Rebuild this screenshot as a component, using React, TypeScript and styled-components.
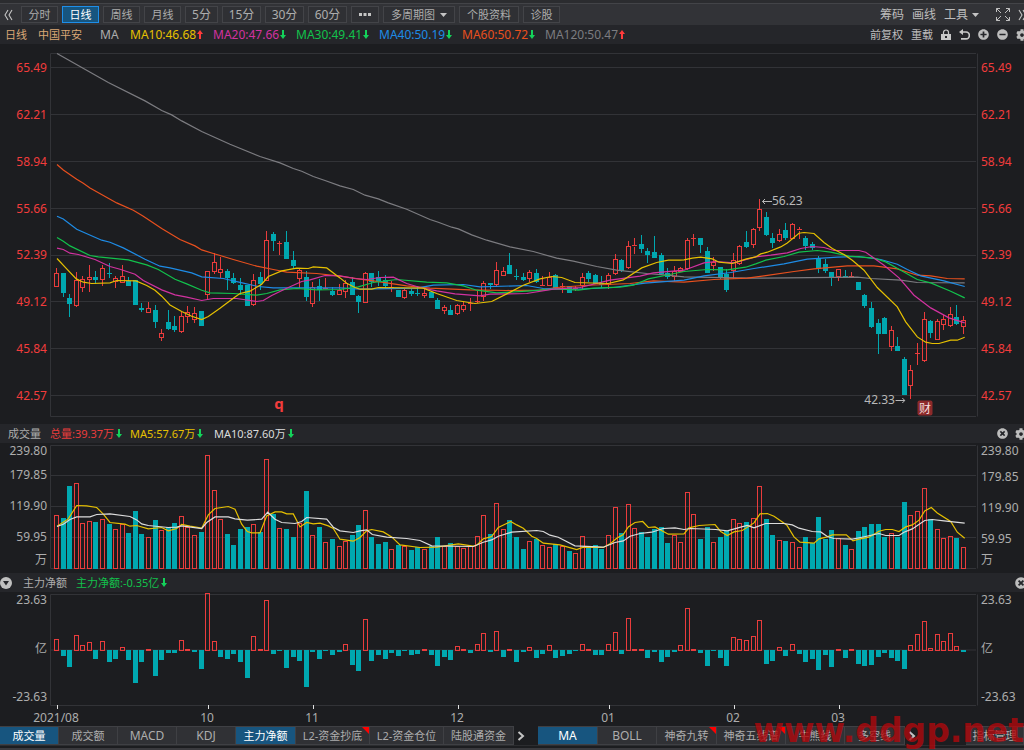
import React from "react";
import styled, { createGlobalStyle } from "styled-components";
import { FaCog, FaPlusCircle, FaMinusCircle, FaTimesCircle } from "react-icons/fa";

const color = {
  page: "#1c1d20",
  bar: "#323337",
  strip: "#25262a",
  edge: "#3f4044",
  grid: "#323337",
  text: "#adadad",
  red: "#ea3c3c",
  label: "#f23c3c",
  teal: "#00a8b0",
  green: "#12c24c",
  yellow: "#e6c000",
  pink: "#d232a0",
  blue: "#1e8ce6",
  orange: "#e8501e",
  gray: "#7c7c80",
  active: "#17557f",
};

const GlobalStyle = createGlobalStyle`
  * { box-sizing: border-box; }
  body {
    margin: 0;
    background: ${color.page};
    color: ${color.text};
    font-family: "Noto Sans", "Noto Sans CJK SC", sans-serif;
    font-size: 12px;
    overflow-x: hidden;
  }
  button, a { font: inherit; color: inherit; text-decoration: none; }
`;

const Page = styled.main`
  position: relative;
  display: flex;
  flex-direction: column;
  overflow: hidden;
`;

const TopEdge = styled.div`
  height: 4px;
  background: #2b2c2f;
  border-bottom: 1px solid #434448;
`;

const Toolbar = styled.nav`
  display: flex;
  align-items: center;
  height: 21px;
  padding-left: 4px;
  background: ${color.bar};
`;

const PeriodGroup = styled.div`
  display: flex;
  flex: 1;
  gap: 4px;
  margin-left: 8px;
`;

const PeriodButton = styled.button<{ $w: number; $active?: boolean; $latin?: boolean }>`
  display: flex;
  align-items: center;
  justify-content: center;
  gap: 5px;
  flex: none;
  width: ${(p) => p.$w}px;
  height: 17px;
  padding: 0;
  white-space: nowrap;
  font-size: ${(p) => (p.$latin ? 12 : 11)}px;
  line-height: 14px;
  border: 1px solid ${(p) => (p.$active ? "#1e8ee8" : "#434448")};
  background: ${(p) => (p.$active ? color.active : "#2f3034")};
  color: ${(p) => (p.$active ? "#fff" : color.text)};
  cursor: pointer;
`;

const PlainButton = styled.button`
  display: flex;
  align-items: center;
  gap: 4px;
  flex: none;
  padding: 0;
  border: 0;
  background: none;
  white-space: nowrap;
  line-height: 16px;
  cursor: pointer;
`;

const Tools = styled.div<{ $gap: number; $small?: boolean }>`
  display: flex;
  align-items: center;
  flex: none;
  gap: ${(p) => p.$gap}px;
  margin-right: ${(p) => (p.$small ? -4 : -3)}px;
  font-size: ${(p) => (p.$small ? 11 : 12)}px;
  color: #bdbdbd;
`;

const InfoRow = styled.header`
  display: flex;
  align-items: center;
  height: 19px;
  background: ${color.strip};
  white-space: nowrap;
  line-height: 16px;
`;

const InfoMain = styled.div`
  display: flex;
  align-items: center;
  flex: 1;
  min-width: 0;
`;

const Name = styled.span<{ $w: number; $c?: string; $latin?: boolean }>`
  flex: none;
  width: ${(p) => p.$w}px;
  color: ${(p) => p.$c || color.text};
  font-size: ${(p) => (p.$latin ? 12 : 11)}px;
`;

const Reading = styled.span<{ $c: string; $w: number; $small?: boolean }>`
  display: flex;
  align-items: center;
  gap: ${(p) => (p.$small ? 2 : 1)}px;
  flex: none;
  min-width: ${(p) => p.$w}px;
  color: ${(p) => p.$c};
  font-size: ${(p) => (p.$small ? 11 : 12)}px;
`;

const Panel = styled.section<{ $h: number }>`
  display: grid;
  grid-template-columns: 50px minmax(0, 1fr) 46px;
  height: ${(p) => p.$h}px;
`;

const Plot = styled.div`
  position: relative;
`;

const Drawing = styled.svg`
  display: block;
  width: 100%;
  height: 100%;
  overflow: visible;
`;

const PriceAxis = styled.div<{ $right?: boolean }>`
  display: flex;
  flex-direction: column;
  justify-content: space-between;
  padding: 16px 3px 20px;
  line-height: 16px;
  text-align: ${(p) => (p.$right ? "left" : "right")};
  color: ${color.label};
`;

const VolumeAxis = styled.div<{ $right?: boolean }>`
  display: grid;
  grid-template-rows: ${(p) => (p.$right ? "26px 31px 31px 21px" : "24px 31px 31px 23px")} 14px;
  padding: 1px 3px 0;
  line-height: 14px;
  text-align: ${(p) => (p.$right ? "left" : "right")};
`;

const FlowAxis = styled(PriceAxis)`
  padding: 1px 3px 2px;
  line-height: 14px;
  color: ${color.text};
`;

const Mark = styled.span<{ $side: "left" | "right" }>`
  position: absolute;
  line-height: 16px;
  transform: translate(${(p) => (p.$side === "left" ? "0" : "-100%")}, -50%);
  display: flex;
  align-items: center;
  color: #b8b8b8;
`;

const Event = styled.span<{ $boxed?: boolean }>`
  position: absolute;
  transform: translate(-50%, -50%);
  width: 15px;
  line-height: 15px;
  text-align: center;
  font-size: ${(p) => (p.$boxed ? 12 : 15)}px;
  font-weight: ${(p) => (p.$boxed ? 400 : 700)};
  border-radius: 2px;
  background: ${(p) => (p.$boxed ? "#8c2a2a" : "none")};
  color: ${(p) => (p.$boxed ? "#f4dede" : color.label)};
`;

const DateAxis = styled.div`
  position: relative;
  height: 20px;
  margin: 0 46px 0 50px;
`;

const DateLabel = styled.time`
  position: absolute;
  top: 4px;
  line-height: 16px;
  transform: translateX(-50%);
`;

const TabBar = styled.nav`
  display: flex;
  align-items: center;
  height: 19px;
  overflow: hidden;
`;

const TabGroup = styled.div`
  display: flex;
  flex: none;
  border: 1px solid ${color.edge};
  border-left: 0;
`;

const Tab = styled.button<{ $w: number; $active?: boolean; $latin?: boolean; $hot?: boolean }>`
  position: relative;
  flex: none;
  width: ${(p) => p.$w}px;
  height: 17px;
  padding: 0;
  border: 0;
  border-right: 1px solid ${color.edge};
  background: ${(p) => (p.$active ? color.active : "#303135")};
  color: ${(p) => (p.$active ? "#fff" : color.text)};
  font-size: ${(p) => (p.$latin ? 12 : 11)}px;
  line-height: 16px;
  white-space: nowrap;
  cursor: pointer;
  &:last-child { border-right: 0; }
  &::after {
    content: "";
    display: ${(p) => (p.$hot ? "block" : "none")};
    position: absolute;
    top: 0;
    right: 0;
    border-top: 7px solid #ff0000;
    border-left: 7px solid transparent;
  }
`;

const NextButton = styled.button`
  display: flex;
  align-items: center;
  justify-content: center;
  flex: none;
  width: 14px;
  height: 17px;
  padding: 0;
  border: 0;
  background: none;
`;

const Spacer = styled.div<{ $w?: number }>`
  flex: ${(p) => (p.$w ? `0 0 ${p.$w}px` : "1")};
`;

const BottomEdge = styled.footer`
  height: 5px;
  border-top: 1px solid #2c2d30;
  border-bottom: 2px solid #3a3a3e;
`;

const Watermark = styled.div`
  position: absolute;
  right: 0;
  bottom: 0;
  font: bold 33px/38px "DejaVu Sans", sans-serif;
  white-space: nowrap;
  color: rgba(178, 8, 12, 0.78);
  pointer-events: none;
`;

/* ---- samples: three sections, stored at three units to a pixel ---- */

const CANDLES: string[] = [
  `r655 670 710 710,g670 670 728 738,g733 745 761 800,r667 690 767 770,r680 688 712 725,r645 681 689 724,g663 683 688 700,r646 655 687 706,g640 669 671 683,r680 685 694 711,r646 680 697 697,g683 693 707 707,g692 692 764 764,g759 774 777 784,r757 775 786 786,g765 780 815 831,r837 850 863 872,g781 817 834 839,g800 828 839 843,r787 799 845 848,r769 787 799 817,r772 790 807 818,g783 783 827 827,r663 664 734 748,r611 638 664 670,r623 657 668 682,g659 663 681 717,g669 684 696 701,g686 705 719 733,g707 707 765 766,r674 691 764 767,g666 683 699 719,r544 571 690 692,g547 553 572 601,r573 579 581 612,g544 578 626 626,g603 632 647 651,r655 661 686 711,g664 682 738 750,r698 711 760 770,g689 708 719 750,r686 714 717 719,g713 723 733 736,r703 720 733 733`,
  `r330 340 363 383,g322 337 373 373,g375 379 395 426,r307 310 398 398,g309 309 333 350,g305 321 334 347,g317 332 345 356,r333 353 354 363,g362 362 378 378,r358 361 383 386,g359 364 369 376,g350 370 371 377,r352 369 375 383,g367 367 383 383,g386 391 416 416,r407 413 422 429,g407 421 434 434,r403 405 431 432,r395 405 418 424,r386 400 401 421,r364 393 394 398,r333 340 380 390,g340 340 342 356,r277 301 344 349,r291 304 317 317,g249 286 311 311,g297 318 320 327,g311 322 327 332,r300 306 325 334,g297 311 334 338,r320 346 347 347,r308 322 346 346,g314 317 351 355,r339 348 349 368,g349 349 367 367,r350 355 356 360,r310 322 346 354,g305 309 324 333,g314 317 341 341,g319 341 342 351,r309 316 344 355,r252 269 311 314,g269 272 302 305,r213 230 293 294,r205 225 228 249,g195 222 234 246,g236 244 252 277,g199 247 261 262,g250 256 310 312,g295 310 318 326,r289 304 319 331,r293 295 304 304`,
  `r175 180 264 268,r163 174 176 196,g175 175 193 216,g203 213 277 277,r232 246 256 270,g262 262 293 295,g267 282 329 334,r220 240 272 294,r196 198 251 252,g154 188 198 203,r146 147 193 203,r58 88 143 152,g98 111 162 167,g160 174 188 202,r148 163 180 185,g130 151 171 179,r130 132 174 174,r143 148 150 176,g170 174 196 209,g187 194 203 209,g230 234 264 278,g238 254 270 277,g278 278 293 315,r267 269 288 301,g272 288 292 293,r277 290 292 292,g306 307 327 329,g342 345 377 382,g366 384 438 442,g417 429 461 521,g411 414 461 461,r439 451 500 512,g472 498 510 510,g532 538 644 644,r556 571 616 656,r489 519 521 552,r397 418 540 544,g422 423 456 471,r419 423 478 479,r406 418 433 447,r382 403 436 440,g376 411 430 432,r408 420 440 459`,
];

const PRICE_BASE = [0, 360, 390];
const X_BASE = [0, 1020, 2052];

const VOLUMES = [
  287, 295, 199, 190, 310, 304, 306, 298, 312, 328, 313, 340, 275, 343, 352, 301, 331, 323, 311, 290, 322, 347, 337, 106,
  211, 298, 343, 377, 328, 323, 312, 338, 118, 283, 325, 328, 351, 310, 215, 347, 322, 368, 359, 379, 363, 346, 317, 271,
  352, 374, 367, 388, 375, 378, 390, 383, 388, 378, 351, 378, 370, 380, 385, 378, 349, 286, 342, 250, 329, 301, 352, 388,
  363, 359, 377, 382, 373, 378, 393, 400, 349, 380, 377, 388, 346, 261, 340, 253, 326, 337, 353, 329, 322, 371, 346, 368,
  218, 284, 359, 323, 368, 351, 335, 298, 310, 307, 295, 199, 298, 346, 362, 364, 368, 382, 353, 370, 292, 359, 331, 355,
  377, 388, 334, 322, 313, 314, 351, 341, 351, 247, 286, 275, 205, 298, 328, 354, 349, 356, 382,
];

const FLOWS = [
  32, -17, -52, 44, 14, 24, -27, 26, -37, -26, 8, -31, -99, -35, 2, -77, -29, -9, -9, 29, 4, -5, -57, 170, 26, -20, -26,
  -12, -35, -85, 41, 4, 149, -11, -3, -54, -20, -34, -111, -6, -26, -3, -14, -5, 17, -46, -62, 92, -32, -14, -26, -9, -17,
  -4, -14, -11, 4, -14, -49, -20, -29, 12, 4, -9, 18, 50, -6, 57, -20, 2, -35, -6, 9, -24, -11, 16, -24, -17, -11, -4, 18,
  4, -14, -14, 18, 53, -11, 95, 2, 4, -24, -6, -37, -20, -6, 15, 125, 2, -9, -49, -4, -23, -49, 38, 32, 29, 41, 89, -43,
  -32, 9, -17, 18, -12, -37, -26, -59, -14, -52, 2, -23, 2, -43, -49, -46, -20, -9, -23, -32, -57, 14, 48, 87, 6, 47, 26,
  50, 12, -5,
];

const MA_LINES: { c: string; d: string[] }[] = [
  {
    c: color.gray,
    d: [
      "171,10 325,97 435,152 485,181 515,194 545,212 605,244 690,282 780,319 840,338 880,355 905,363 940,379 975,391",
      "0,47 40,58 75,75 115,86 145,98 200,117 270,148 295,156 335,171 355,176 395,194 440,210 510,230 580,244 650,264 700,273 770,289 830,300 920,310 980,315",
      "0,290 200,294 520,291 560,295 650,300 700,307 842,308",
    ],
  },
  {
    c: color.orange,
    d: [
      "171,343 190,359 230,387 250,399 270,413 350,458 400,480 430,498 485,535 540,568 585,587 605,599 640,610 700,628 770,648 820,658 860,666 950,670",
      "0,318 55,326 100,332 200,347 270,354 390,359 500,361 600,360 650,352 730,346 870,340 940,332",
      "0,306 90,298 190,294 240,287 330,274 390,266 490,257 570,257 640,266 700,285 740,287 790,295 842,296",
    ],
  },
  {
    c: color.blue,
    d: [
      "171,498 190,506 230,537 305,570 330,576 370,593 435,627 480,648 510,653 575,668 605,680 670,685 730,699 775,709 820,713",
      "0,353 60,357 230,354 280,345 370,343 420,350 560,346 610,355 680,358 760,355 820,352 915,339",
      "0,300 60,287 140,277 210,265 300,251 370,237 460,231 525,229 590,238 640,252 670,268 710,287 780,302 842,319",
    ],
  },
  {
    c: color.green,
    d: [
      "171,562 190,573 210,587 270,616 295,620 385,629 440,644 475,658 525,687 560,701 605,720 630,728 700,730 770,735 800,730 840,719 890,715 950,719",
      "0,358 55,350 100,337 170,328 260,336 320,338 370,347 410,360 470,368 560,363 650,356 715,360 760,354 840,351 880,345 925,326 975,316",
      "0,274 70,268 130,269 185,261 215,251 245,240 300,229 345,216 400,211 440,216 495,228 570,234 605,245 650,270 700,298 740,308 800,333 842,353",
    ],
  },
  {
    c: color.pink,
    d: [
      "171,594 190,598 210,609 235,613 285,628 330,649 360,657 405,672 430,691 485,719 525,734 560,741 605,751 640,745 710,745 770,754 790,751 815,736 860,714 905,694 930,689 975,676",
      "0,317 45,325 80,328 120,322 160,321 200,340 240,352 290,362 345,371 420,377 450,372 560,370 640,357 720,352 810,330 900,318 940,308",
      "0,270 60,248 95,244 150,248 215,230 260,225 310,218 350,205 385,199 420,202 450,211 525,211 545,216 600,255 645,293 690,345 740,383 795,413 842,428",
    ],
  },
  {
    c: color.yellow,
    d: [
      "171,625 200,656 229,686 250,696 275,700 330,698 350,691 408,692 440,706 465,720 485,738 510,764 545,784 575,798 605,808 625,799 660,774 705,740 720,730 750,723 785,702 805,679 845,662 890,654 925,655 940,650 980,653",
      "0,323 20,339 45,352 60,357 95,357 115,352 250,354 290,370 350,391 405,400 455,394 500,371 550,345 600,326 635,319 665,322 705,337 805,340 850,329 905,293 950,277 985,270 1020,270",
      "0,239 25,234 50,231 85,236 105,246 145,250 185,237 215,230 230,221 250,216 290,200 310,188 345,159 360,157 390,160 420,187 445,205 480,223 505,240 540,270 580,322 640,380 665,425 700,470 725,486 745,490 765,490 800,480 820,480 842,471",
    ],
  },
];

const VOLUME_LINES: { c: string; d: string[] }[] = [
  {
    c: color.yellow,
    d: [
      "171,318 205,296 230,256 260,257 290,262 310,282 330,307 375,312 390,318 410,316 445,326 485,322 505,332 530,325 545,313 570,318 605,324 625,284 645,265 685,259 705,267 725,312 742,334 755,338 780,338 800,287 825,275 845,275 860,281 880,281 900,320 920,307 940,311 960,309 985,317 1000,325",
      "0,357 40,363 60,352 80,332 95,328 130,335 155,350 180,374 240,382 290,381 355,371 400,378 410,375 430,356 455,349 475,322 512,304 530,314 550,324 575,348 590,355 610,369 660,374 710,388 730,381 790,382 810,371 830,354 850,343 865,320 885,307 908,304 925,322 945,320 985,342",
      "0,341 15,323 45,316 93,313 110,334 130,346 150,335 175,331 210,308 228,281 250,280 270,288 308,314 330,350 348,366 390,369 405,356 430,350 445,344 487,344 507,362 525,357 555,351 585,333 605,328 625,328 645,334 665,320 685,314 705,300 722,272 742,262 760,278 800,304 820,336 842,354",
    ],
  },
  {
    c: "#dcdcdc",
    d: [
      "171,319 190,312 210,298 230,290 270,290 290,283 330,281 390,289 410,299 425,311 445,316 505,322 530,321 545,317 605,325 620,307 645,290 685,290 705,296 742,300 785,297 803,276 825,297 845,307 885,310 905,304 920,292 980,297 1000,321",
      "0,332 40,337 60,332 80,329 97,343 140,351 200,355 240,361 275,377 400,379 430,366 455,359 475,348 515,336 590,331 610,334 630,345 655,351 705,377 790,381 825,367 850,362 870,348 900,340 935,336 970,325 1005,323",
      "0,328 20,325 95,328 130,332 170,321 190,316 210,323 245,310 300,310 325,314 345,324 385,334 410,335 430,349 450,355 505,357 530,352 585,340 605,346 645,346 660,336 685,326 722,301 745,298 780,302 842,309",
    ],
  },
];

type Candle = { up: boolean; high: number; top: number; bottom: number; low: number };

const candles: Candle[] = CANDLES.flatMap((section, s) =>
  section.split(",").map((item) => {
    const [high, top, bottom, low] = item
      .slice(1)
      .split(" ")
      .map((v) => Math.floor((Number(v) + PRICE_BASE[s]) / 3) + 6);
    return { up: item[0] === "r", high, top, bottom, low };
  })
);

const PLOT_W = 928;
const barLeft = (i: number) => Math.round(4 + i * 6.572);

function linePoints(sections: string[], bases: number[], shift: number) {
  return sections
    .flatMap((section, s) =>
      section.split(" ").map((pair) => {
        const [x, y] = pair.split(",").map(Number);
        return `${((x + X_BASE[s]) / 3 - 50).toFixed(1)},${((y + bases[s]) / 3 + shift).toFixed(1)}`;
      })
    )
    .join(" ");
}

function Frame({ top, bottom, rows }: { top: number; bottom: number; rows: number[] }) {
  return (
    <g stroke={color.grid} fill="none">
      <path d={`M0.5 ${bottom}V${top}H926M0.5 ${bottom}H926M927.5 ${top}V${bottom}`} />
      {rows.map((y) => (
        <path key={y} d={`M0 ${y}H926`} />
      ))}
    </g>
  );
}

function PriceChart() {
  return (
    <Drawing viewBox={`0 0 ${PLOT_W} 380`} preserveAspectRatio="none" role="img" aria-label="日线">
      <Frame top={9.5} bottom={372.5} rows={[23.5, 70.5, 117.5, 164.5, 211.5, 257.5, 304.5, 351.5]} />
      {candles.map((c, i) => {
        const x = barLeft(i);
        const h = c.bottom - c.top;
        if (c.up) {
          return (
            <g key={i} stroke={color.red} fill="none">
              <path d={`M${x + 2.5} ${c.high}V${c.top}M${x + 2.5} ${c.bottom + 1}V${c.low + 1}`} />
              {h < 2 ? <path d={`M${x} ${c.top + 0.5}h5`} /> : <rect x={x + 0.5} y={c.top + 0.5} width={4} height={h} />}
            </g>
          );
        }
        return (
          <g key={i} fill={color.teal}>
            <rect x={x + 2} y={c.high} width={1} height={c.low - c.high + 1} />
            <rect x={x} y={c.top} width={5} height={h + 1} />
          </g>
        );
      })}
      {MA_LINES.map((line) => (
        <polyline key={line.c} points={linePoints(line.d, PRICE_BASE, 6.2)} fill="none" stroke={line.c} strokeWidth={1.2} />
      ))}
    </Drawing>
  );
}

function VolumeChart() {
  return (
    <Drawing viewBox={`0 0 ${PLOT_W} 130`} preserveAspectRatio="none" role="img" aria-label="成交量">
      <Frame top={2.5} bottom={125.5} rows={[32.5, 63.5, 94.5]} />
      {VOLUMES.map((v, i) => {
        const y = Math.floor(v / 3) - 23;
        return candles[i].up ? (
          <rect key={i} x={barLeft(i) + 0.5} y={y + 0.5} width={4} height={125 - y} fill="none" stroke={color.red} />
        ) : (
          <rect key={i} x={barLeft(i)} y={y} width={5} height={126 - y} fill={color.teal} />
        );
      })}
      {VOLUME_LINES.map((line) => (
        <polyline key={line.c} points={linePoints(line.d, [0, 0, 0], -22.8)} fill="none" stroke={line.c} strokeWidth={1.2} />
      ))}
    </Drawing>
  );
}

const MONTHS = [
  { x: 7, text: "2021/08" },
  { x: 158, text: "10" },
  { x: 263, text: "11" },
  { x: 408, text: "12" },
  { x: 559, text: "01" },
  { x: 684, text: "02" },
  { x: 789, text: "03" },
];

function FlowChart() {
  return (
    <Drawing viewBox={`0 0 ${PLOT_W} 114`} preserveAspectRatio="none" role="img" aria-label="主力净额">
      <Frame top={2.5} bottom={113.5} rows={[58]} />
      {FLOWS.map((v, i) => {
        const h = Math.round(Math.abs(v) / 3);
        return v > 0 ? (
          <rect key={i} x={barLeft(i) + 0.5} y={58.5 - h} width={4} height={h} fill="none" stroke={color.red} />
        ) : (
          <rect key={i} x={barLeft(i)} y={58} width={5} height={h} fill={color.teal} />
        );
      })}
      {MONTHS.map((m) => (
        <path key={m.x} d={`M${m.x + 0.5} 113V117`} stroke="#e0e0e0" />
      ))}
    </Drawing>
  );
}

function Trend({ up }: { up?: boolean }) {
  return (
    <svg width="6" height="9" viewBox="0 0 6 9" fill={up ? "#ff3b3b" : "#14d25a"}>
      <path d={up ? "M3 0L6 4H4V9H2V4H0Z" : "M3 9L6 5H4V0H2V5H0Z"} />
    </svg>
  );
}

function Caret() {
  return (
    <svg width="7" height="4" viewBox="0 0 7 4" fill="#c4c4c4">
      <path d="M0 0H7L3.500 4Z" />
    </svg>
  );
}

function DoubleChevron({ right }: { right?: boolean }) {
  return (
    <svg width="9" height="12" viewBox="0 0 9 12" fill="none" stroke="#c4c4c4" strokeWidth="1.1">
      <path d={right ? "M1 1L4 6L1 11M5 1L8 6L5 11" : "M4 1L1 6L4 11M8 1L5 6L8 11"} />
    </svg>
  );
}

function NextIcon() {
  return (
    <svg width="8" height="10" viewBox="0 0 8 10" fill="none" stroke="#c4c4c4" strokeWidth="2">
      <path d="M1.500 1L6 5L1.500 9" />
    </svg>
  );
}

function ExpandIcon() {
  return (
    <svg width="14" height="13" viewBox="0 0 14 13" fill="none" stroke="#c0c0c0">
      <path d="M0.500 4V0.500H4M0.500 0.500L5 5M10 0.500H13.500V4M13.500 0.500L9 5M0.500 9V12.500H4M0.500 12.500L5 8M10 12.500H13.500V9M13.500 12.500L9 8" />
    </svg>
  );
}

function LockIcon() {
  return (
    <svg width="10" height="12" viewBox="0 0 10 12">
      <path d="M2.500 5V3.500A2.500 2.500 0 0 1 7.500 3.500V5" fill="none" stroke="#c8c8c8" strokeWidth="1.200" />
      <path d="M0 5H10V11H0Z" fill="#c8c8c8" />
      <rect x="4" y="7" width="2" height="2" fill="#25262a" />
    </svg>
  );
}

function UndoIcon() {
  return (
    <svg width="11" height="11" viewBox="0 0 11 11">
      <path d="M2 3H7A3.300 3.300 0 0 1 7 9.800H2" fill="none" stroke="#c8c8c8" strokeWidth="1.700" />
      <path d="M0 3L4 0V6Z" fill="#c8c8c8" />
    </svg>
  );
}

function CollapseIcon() {
  return (
    <svg width="12" height="12" viewBox="0 0 12 12">
      <circle cx="6" cy="6" r="6" fill="#c0c0c0" />
      <path d="M3 4H9L6 8.500Z" fill="#25262a" />
    </svg>
  );
}

function PointerArrow({ right }: { right?: boolean }) {
  return (
    <svg width="10" height="7" viewBox="0 0 10 7" fill="none" stroke="#b8b8b8">
      <path d={right ? "M0 3.500H9.500M7 1L9.500 3.500L7 6" : "M10 3.500H0.500M3 1L0.500 3.500L3 6"} />
    </svg>
  );
}

const PERIODS = [
  { t: "分时", w: 37 },
  { t: "日线", w: 37, active: true },
  { t: "周线", w: 37 },
  { t: "月线", w: 37 },
  { t: "5分", w: 33 },
  { t: "15分", w: 39 },
  { t: "30分", w: 39 },
  { t: "60分", w: 39 },
];

const AVERAGES = [
  { t: "MA10:46.68", c: color.yellow, up: true },
  { t: "MA20:47.66", c: color.pink },
  { t: "MA30:49.41", c: color.green },
  { t: "MA40:50.19", c: color.blue },
  { t: "MA60:50.72", c: color.orange },
  { t: "MA120:50.47", c: color.gray, up: true },
];

const PRICES = ["65.49", "62.21", "58.94", "55.66", "52.39", "49.12", "45.84", "42.57"];
const VOLUME_STEPS = ["239.80", "179.85", "119.90", "59.95", "万"];
const FLOW_STEPS = ["23.63", "亿", "-23.63"];

const LEFT_TABS = [
  { t: "成交量", w: 59, active: true },
  { t: "成交额", w: 59 },
  { t: "MACD", w: 59, latin: true },
  { t: "KDJ", w: 59, latin: true },
  { t: "主力净额", w: 60, active: true },
  { t: "L2-资金抄底", w: 74, hot: true },
  { t: "L2-资金仓位", w: 74 },
  { t: "陆股通资金", w: 69 },
];

const RIGHT_TABS = [
  { t: "MA", w: 60, latin: true, active: true },
  { t: "BOLL", w: 59, latin: true },
  { t: "神奇九转", w: 60, hot: true },
  { t: "神奇五线谱", w: 69, hot: true },
  { t: "牛熊线", w: 59 },
  { t: "多空线", w: 59 },
];

const percent = (v: number, whole: number) => `${(v / whole) * 100}%`;

function Tabs({ items }: { items: { t: string; w: number; active?: boolean; latin?: boolean; hot?: boolean }[] }) {
  return (
    <TabGroup>
      {items.map((tab) => (
        <Tab key={tab.t} $w={tab.w} $active={tab.active} $latin={tab.latin} $hot={tab.hot}>
          {tab.t}
        </Tab>
      ))}
    </TabGroup>
  );
}

export default function App() {
  return (
    <>
      <GlobalStyle />
      <Page>
        <TopEdge />
        <Toolbar>
          <PlainButton aria-label="收起">
            <DoubleChevron />
          </PlainButton>
          <PeriodGroup>
            {PERIODS.map((p) => (
              <PeriodButton key={p.t} $w={p.w} $active={p.active} $latin={/\d/.test(p.t)}>
                {p.t}
              </PeriodButton>
            ))}
            <PeriodButton $w={28} aria-label="更多">
              <svg width="12" height="3" viewBox="0 0 12 3" fill="#c4c4c4">
                <path d="M0 0H3V3H0ZM4.500 0H7.500V3H4.500ZM9 0H12V3H9Z" />
              </svg>
            </PeriodButton>
            <PeriodButton $w={72}>
              多周期图
              <Caret />
            </PeriodButton>
            <PeriodButton $w={60}>个股资料</PeriodButton>
            <PeriodButton $w={37}>诊股</PeriodButton>
          </PeriodGroup>
          <Tools $gap={8}>
            <PlainButton>筹码</PlainButton>
            <PlainButton>画线</PlainButton>
            <PlainButton>
              工具
              <Caret />
            </PlainButton>
            <Spacer $w={1} />
            <PlainButton aria-label="全屏">
              <ExpandIcon />
            </PlainButton>
            <PlainButton aria-label="展开">
              <DoubleChevron right />
            </PlainButton>
          </Tools>
        </Toolbar>

        <InfoRow>
          <InfoMain>
            <Spacer $w={5} />
            <Name $w={33} $c="#dba876">日线</Name>
            <Name $w={62} $c="#dba876">中国平安</Name>
            <Name $w={30} $latin>MA</Name>
            {AVERAGES.map((m) => (
              <Reading key={m.t} $c={m.c} $w={83}>
                {m.t}
                <Trend up={m.up} />
              </Reading>
            ))}
          </InfoMain>
          <Tools $gap={8} $small>
            <PlainButton>前复权</PlainButton>
            <PlainButton>重载</PlainButton>
            <PlainButton aria-label="锁定"><LockIcon /></PlainButton>
            <PlainButton aria-label="撤销"><UndoIcon /></PlainButton>
            <PlainButton aria-label="放大"><FaPlusCircle size={11} /></PlainButton>
            <PlainButton aria-label="缩小"><FaMinusCircle size={11} /></PlainButton>
            <PlainButton aria-label="设置"><FaCog size={12} /></PlainButton>
          </Tools>
        </InfoRow>

        <Panel $h={380}>
          <PriceAxis>
            {PRICES.map((p) => <span key={p}>{p}</span>)}
          </PriceAxis>
          <Plot>
            <PriceChart />
            <Mark $side="left" style={{ left: percent(712, PLOT_W), top: percent(157, 380) }}>
              <PointerArrow />
              56.23
            </Mark>
            <Mark $side="right" style={{ left: percent(855, PLOT_W), top: percent(356, 380) }}>
              42.33
              <PointerArrow right />
            </Mark>
            <Event style={{ left: percent(229, PLOT_W), top: percent(359, 380) }}>q</Event>
            <Event $boxed style={{ left: percent(875, PLOT_W), top: percent(364, 380) }}>财</Event>
          </Plot>
          <PriceAxis $right>
            {PRICES.map((p) => <span key={p}>{p}</span>)}
          </PriceAxis>
        </Panel>

        <InfoRow>
          <InfoMain>
            <Spacer $w={8} />
            <Name $w={42}>成交量</Name>
            <Reading $c={color.red} $w={80} $small>总量:39.37万<Trend /></Reading>
            <Reading $c={color.yellow} $w={84} $small>MA5:57.67万<Trend /></Reading>
            <Reading $c="#dcdcdc" $w={84} $small>MA10:87.60万<Trend /></Reading>
          </InfoMain>
          <Tools $gap={7}>
            <PlainButton aria-label="关闭成交量"><FaTimesCircle size={11} /></PlainButton>
            <PlainButton aria-label="成交量设置"><FaCog size={12} /></PlainButton>
          </Tools>
        </InfoRow>
        <Panel $h={130}>
          <VolumeAxis>
            {VOLUME_STEPS.map((v) => <span key={v}>{v}</span>)}
          </VolumeAxis>
          <Plot><VolumeChart /></Plot>
          <VolumeAxis $right>
            {VOLUME_STEPS.map((v) => <span key={v}>{v}</span>)}
          </VolumeAxis>
        </Panel>

        <InfoRow>
          <InfoMain>
            <PlainButton aria-label="折叠"><CollapseIcon /></PlainButton>
            <Spacer $w={11} />
            <Name $w={53}>主力净额</Name>
            <Reading $c={color.green} $w={90} $small>主力净额:-0.35亿<Trend /></Reading>
          </InfoMain>
          <Tools $gap={7}>
            <PlainButton aria-label="关闭主力净额"><FaTimesCircle size={12} /></PlainButton>
          </Tools>
        </InfoRow>
        <Panel $h={114}>
          <FlowAxis>
            {FLOW_STEPS.map((v) => <span key={v}>{v}</span>)}
          </FlowAxis>
          <Plot><FlowChart /></Plot>
          <FlowAxis $right>
            {FLOW_STEPS.map((v) => <span key={v}>{v}</span>)}
          </FlowAxis>
        </Panel>
        <DateAxis>
          {MONTHS.map((m) => (
            <DateLabel key={m.x} style={{ left: percent(m.x - 1, PLOT_W) }}>{m.text}</DateLabel>
          ))}
        </DateAxis>

        <TabBar>
          <Tabs items={LEFT_TABS} />
          <NextButton aria-label="更多指标"><NextIcon /></NextButton>
          <Spacer $w={10} />
          <Tabs items={RIGHT_TABS} />
          <NextButton aria-label="更多主图指标"><NextIcon /></NextButton>
          <Spacer />
          <Tabs items={[{ t: "指标管理", w: 57 }]} />
        </TabBar>
        <BottomEdge />
        <Watermark>www.ddgp.net</Watermark>
      </Page>
    </>
  );
}
